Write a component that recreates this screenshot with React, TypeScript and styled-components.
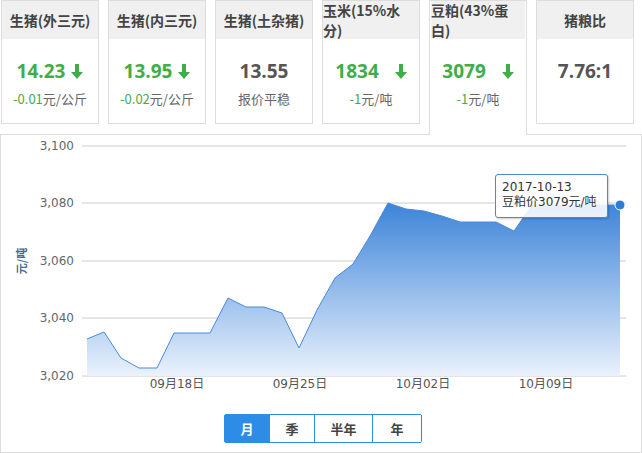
import React from "react";
import styled, { createGlobalStyle } from "styled-components";

const G = createGlobalStyle`
  body { margin: 0; background: #fff; font-family: "Microsoft YaHei", "Noto Sans CJK SC", "Liberation Sans", sans-serif; }
`;
const Page = styled.div`width: 642px; height: 453px; overflow: hidden; position: relative;`;
const Cards = styled.div`display: flex; gap: 9px; padding-left: 1px; height: 135px;`;
const Card = styled.div<{ $active?: boolean }>`
  width: 98px; height: ${p => (p.$active ? "135px" : "124px")};
  border: 1px solid #ddd; border-bottom: ${p => (p.$active ? "none" : "1px solid #ddd")};
  box-sizing: border-box; background: #fff; display: flex; flex-direction: column;
  position: relative; z-index: 2; ${p => (p.$active ? "padding:0 1px;" : "")}
`;
const Head = styled.div`
  height: 38px; background: #f0f0f0; display: flex; align-items: center; justify-content: center;
  font-size: 14px; font-weight: bold; color: #444;
`;
const Val = styled.div<{ $green?: boolean }>`
  margin-top: 19px; text-align: center; font-size: 19px; font-weight: bold;
  color: ${p => (p.$green ? "#3fae49" : "#555")}; font-family: "Open Sans", "Liberation Sans", sans-serif;
  display: flex; justify-content: center; align-items: center; gap: 6px;
`;
const Sub = styled.div`margin-top: 5px; text-align: center; font-size: 13px; color: #666;`;
const Num = styled.span`color: #3fae49;`;
const Panel = styled.div`
  position: absolute; left: 0; top: 134px; width: 642px; height: 319px;
  border: 1px solid #ddd; box-sizing: border-box; z-index: 1;
`;
const Btns = styled.div`position: absolute; left: 224px; top: 414px; display: flex; z-index: 3;
  border: 1px solid #2d8de6; border-radius: 2px; height: 29px; box-sizing: border-box;`;
const Btn = styled.div<{ $on?: boolean; $w: number }>`
  width: ${p => p.$w}px; display: flex; align-items: center; justify-content: center;
  font-size: 13px; font-weight: bold; background: ${p => (p.$on ? "#2d8de6" : "#fff")};
  color: ${p => (p.$on ? "#fff" : "#444")}; border-left: 1px solid #2d8de6;
  &:first-child { border-left: none; }
`;
const Tip = styled.div`
  position: absolute; left: 495px; top: 174px; width: 113px; height: 44px; box-sizing: border-box;
  border: 1px solid #4a89d8; border-radius: 3px; background: rgba(255,255,255,0.88);
  padding: 5px 6px; font-size: 12px; line-height: 15px; color: #333; z-index: 4;
  font-family: "DejaVu Sans", "Noto Sans CJK SC", sans-serif; box-shadow: 1px 1px 2px rgba(0,0,0,0.2);
`;

const Arrow = () => (
  <svg width="12" height="15" viewBox="0 0 12 15"><path d="M4 0h4v8h4l-6 7-6-7h4z" fill="#3fae49" /></svg>
);

const pts: [number, number][] = [[87,339],[104,332],[121,358],[139,368],[157,368],[174,333],[192,333],[210,333],[228,298],[246,307],[264,307],[282,313],[299,348],[317,310],[335,278],[353,264],[370,236],[388,203],[406,209],[424,211],[442,216],[460,222],[478,222],[496,222],[514,231],[532,205],[550,205],[568,205],[586,205],[604,205],[620,205]];

export default function App() {
  const line = pts.map((p, i) => `${i ? "L" : "M"}${p[0]} ${p[1]}`).join(" ");
  const area = `${line} L620 376 L87 376 Z`;
  const ys = [[146,"3,100"],[203,"3,080"],[261,"3,060"],[318,"3,040"],[376,"3,020"]] as const;
  return (
    <Page>
      <G />
      <Cards>
        <Card><Head>生猪(外三元)</Head><Val $green>14.23 <Arrow /></Val><Sub><Num>-0.01</Num>元/公斤</Sub></Card>
        <Card><Head>生猪(内三元)</Head><Val $green>13.95 <Arrow /></Val><Sub><Num>-0.02</Num>元/公斤</Sub></Card>
        <Card><Head>生猪(土杂猪)</Head><Val>13.55</Val><Sub>报价平稳</Sub></Card>
        <Card><Head>玉米(15%水分)</Head><Val $green>1834 &nbsp;<Arrow /></Val><Sub><Num>-1</Num>元/吨</Sub></Card>
        <Card $active><Head>豆粕(43%蛋白)</Head><Val $green>3079 &nbsp;<Arrow /></Val><Sub><Num>-1</Num>元/吨</Sub></Card>
        <Card><Head>猪粮比</Head><Val>7.76:1</Val></Card>
      </Cards>
      <Panel />
      <svg width="642" height="453" style={{ position: "absolute", left: 0, top: 0, zIndex: 2 }}>
        <defs>
          <linearGradient id="g" x1="0" y1="0" x2="0" y2="1" gradientUnits="userSpaceOnUse" y1={200} y2={376}>
            <stop offset="0" stopColor="#3a82d8" />
            <stop offset="1" stopColor="#eaf2fc" />
          </linearGradient>
        </defs>
        {ys.map(([y, t]) => (
          <g key={t}>
            <line x1="82" x2="626" y1={y} y2={y} stroke="#ccc" />
            <text x="74" y={y + 4} textAnchor="end" fontSize="12" fill="#666" fontFamily="DejaVu Sans, sans-serif">{t}</text>
          </g>
        ))}
        <path d={area} fill="url(#g)" />
        <path d={line} fill="none" stroke="#4a89d8" strokeWidth="1" />
        <circle cx="620" cy="205" r="5" fill="#2d7dd6" stroke="#fff" strokeWidth="1" />
        {[[177,"09月18日"],[300,"09月25日"],[423,"10月02日"],[546,"10月09日"]].map(([x, t]) => (
          <text key={t as string} x={x as number} y="388" textAnchor="middle" fontSize="12" fill="#555" fontFamily="DejaVu Sans, Noto Sans CJK SC, sans-serif">{t}</text>
        ))}
        <text transform="translate(26 261) rotate(-90)" textAnchor="middle" fontSize="11" fontWeight="bold" fill="#4a6a90" fontFamily="Noto Sans CJK SC, sans-serif">元/吨</text>
      </svg>
      <Tip>2017-10-13<br />豆粕价3079元/吨</Tip>
      <Btns>
        <Btn $on $w={44}>月</Btn><Btn $w={44}>季</Btn><Btn $w={57}>半年</Btn><Btn $w={48}>年</Btn>
      </Btns>
    </Page>
  );
}
